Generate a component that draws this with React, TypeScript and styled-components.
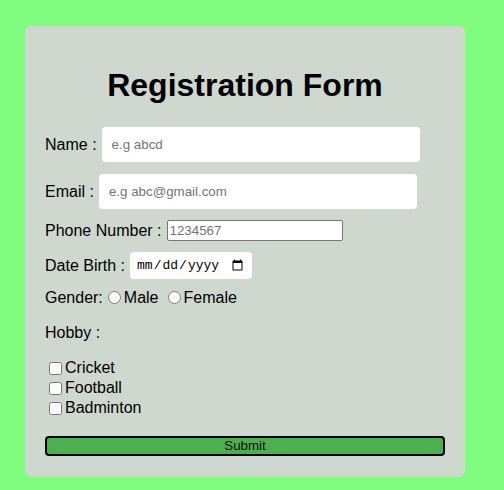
import React from "react";
import styled, { createGlobalStyle } from "styled-components";

const GlobalStyle = createGlobalStyle`
  html, body {
    margin: 0;
    padding: 0;
    background: #80fc7e;
  }
  body {
    font-family: "Liberation Sans", Arial, sans-serif;
    color: #000;
  }
  * { box-sizing: border-box; }
`;

const Page = styled.div`
  padding: 26px 0 15px 25px;
`;

const Card = styled.form`
  width: 440px;
  background: #ced8cf;
  border-radius: 6px;
  padding: 20px 20px 21px;
  display: flex;
  flex-direction: column;
`;

const Title = styled.h1`
  margin: 21px 0 23px;
  font-size: 32px;
  font-weight: bold;
  text-align: center;
  line-height: 37px;
`;

const Row = styled.div<{ $space?: number }>`
  display: flex;
  align-items: center;
  gap: 5px;
  margin-top: ${(p) => p.$space ?? 0}px;
  font-size: 16px;
`;

const Line = styled.div<{ $space?: number }>`
  margin-top: ${(p) => p.$space ?? 0}px;
  font-size: 16px;
  line-height: 19px;
  display: flex;
  align-items: center;
`;

const Label = styled.label`
  font-size: 16px;
  white-space: pre;
`;

const TextInput = styled.input`
  width: 318px;
  height: 35px;
  padding: 0 10px;
  border: none;
  border-radius: 4px;
  background: #fff;
  font-family: "Liberation Sans", Arial, sans-serif;
  font-size: 13.33px;
  outline: none;
  &::placeholder { color: #757575; }
`;

const PlainInput = styled.input`
  width: 176px;
  height: 21px;
  padding: 1px 2px;
  border: 1px solid #767676;
  border-radius: 2px;
  background: #fff;
  font-family: "Liberation Sans", Arial, sans-serif;
  font-size: 13.33px;
  &::placeholder { color: #757575; }
`;

const DateInput = styled.input`
  width: 122px;
  height: 27px;
  padding: 0 6px;
  border: none;
  border-radius: 4px;
  background: #fff;
  font-family: "Liberation Mono", monospace;
  font-size: 13px;
  color: #000;
`;

const Radio = styled.input<{ $lead?: number }>`
  width: 13px;
  height: 13px;
  margin: 0 3px 0 ${(p) => p.$lead ?? 5}px;
`;

const Check = styled.input`
  width: 13px;
  height: 13px;
  margin: 0 3px 0 4px;
`;

const CheckLine = styled.div`
  height: 20px;
  display: flex;
  align-items: center;
  font-size: 16px;
`;

const CheckList = styled.div<{ $space?: number }>`
  margin-top: ${(p) => p.$space ?? 0}px;
  display: flex;
  flex-direction: column;
`;

const Submit = styled.button`
  margin-top: 18px;
  width: 100%;
  height: 20px;
  padding: 0;
  border: 2px solid #000;
  border-radius: 4px;
  background: #4caf50;
  color: #111;
  font-family: "Liberation Sans", Arial, sans-serif;
  font-size: 13.33px;
  line-height: 16px;
`;

export default function App() {
  return (
    <Page>
      <GlobalStyle />
      <Card onSubmit={(e) => e.preventDefault()}>
        <Title>Registration Form</Title>
        <Row>
          <Label>Name :</Label>
          <TextInput type="text" placeholder="e.g abcd" />
        </Row>
        <Row $space={12}>
          <Label>Email :</Label>
          <TextInput type="email" placeholder="e.g abc@gmail.com" />
        </Row>
        <Row $space={11}>
          <Label>Phone Number :</Label>
          <PlainInput type="text" placeholder="1234567" />
        </Row>
        <Row $space={11}>
          <Label>Date Birth :</Label>
          <DateInput type="date" />
        </Row>
        <Line $space={9}>
          Gender:<Radio type="radio" name="g" />Male{" "}
          <Radio type="radio" name="g" $lead={9} />Female
        </Line>
        <Line $space={16}>Hobby :</Line>
        <CheckList $space={16}>
          <CheckLine>
            <Check type="checkbox" />Cricket
          </CheckLine>
          <CheckLine>
            <Check type="checkbox" />Football
          </CheckLine>
          <CheckLine>
            <Check type="checkbox" />Badminton
          </CheckLine>
        </CheckList>
        <Submit type="submit">Submit</Submit>
      </Card>
    </Page>
  );
}
